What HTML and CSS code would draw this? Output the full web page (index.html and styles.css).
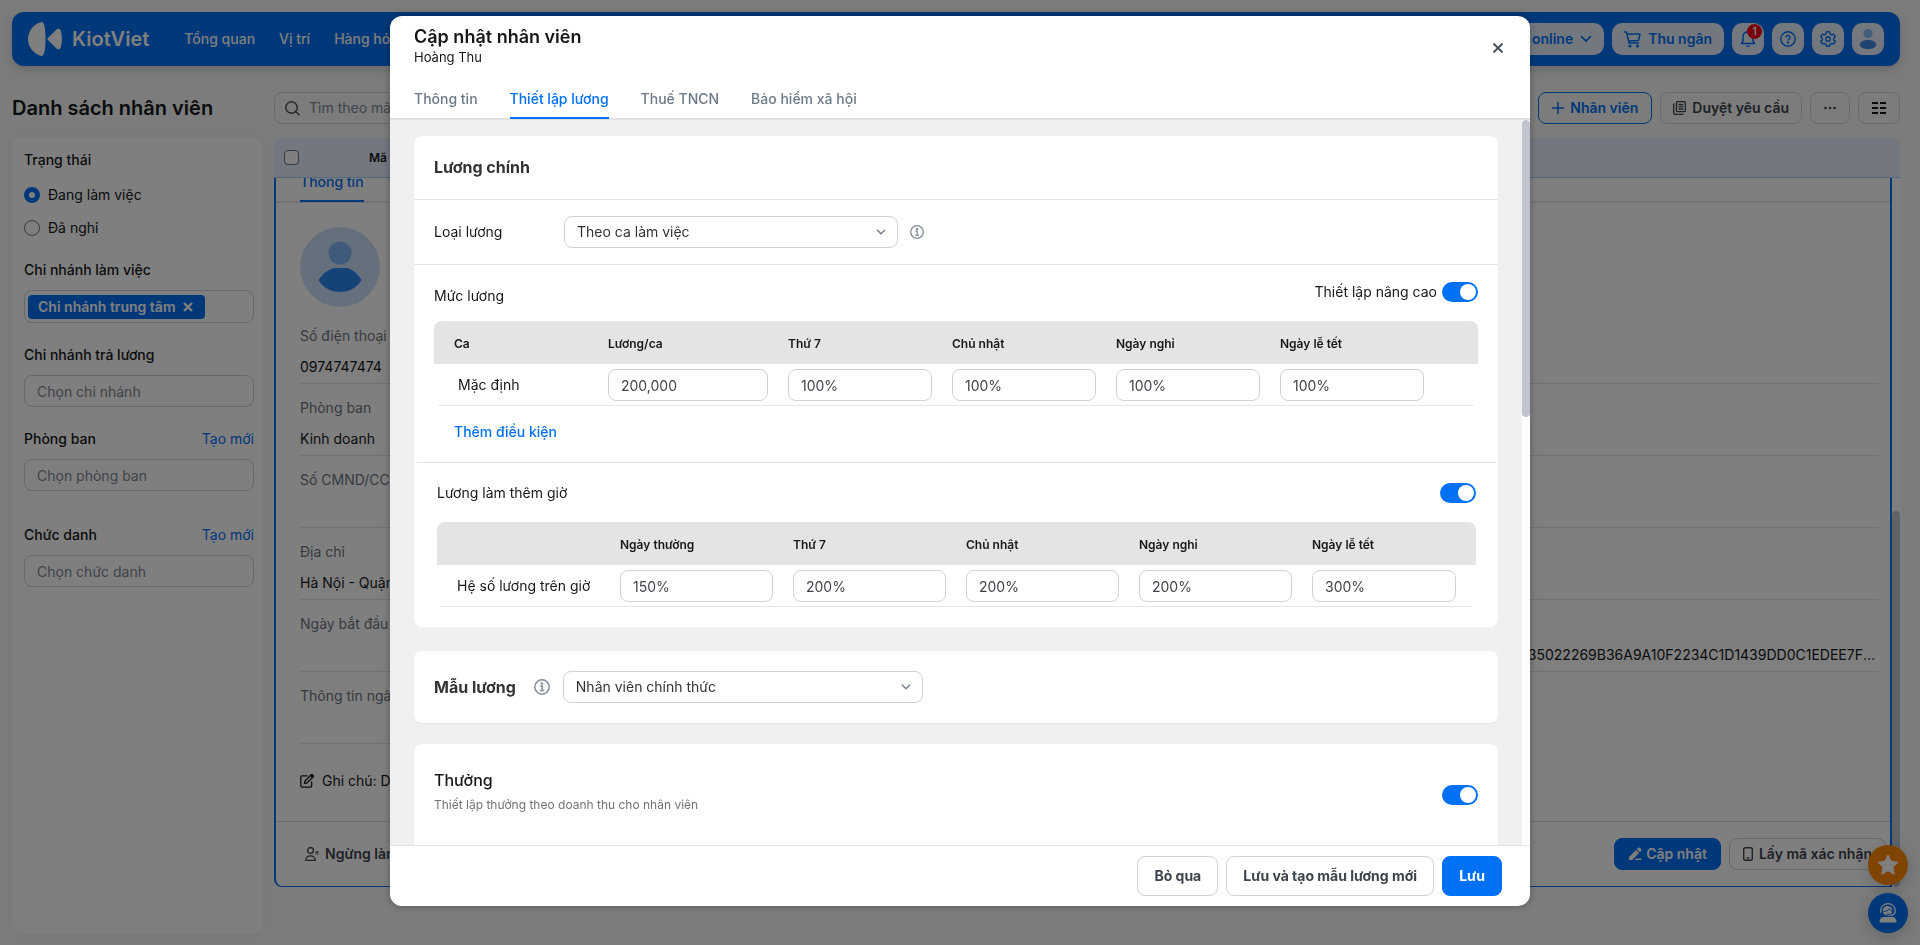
FILE: index.html
```html
<!DOCTYPE html>
<html lang="vi">
<head>
    <meta charset="UTF-8">
    <meta name="viewport" content="width=device-width, initial-scale=1.0">
    <title>Danh sách nhân viên</title>
    <link rel="stylesheet" href="styles.css">
</head>
<body>

    <div class="page">
        <header class="topbar">
            <a href="#" class="logo">
                <svg width="34" height="34" viewBox="0 0 34 34" fill="currentColor">
                    <path d="M14 0C16 0 17.500 6 17.500 17S16 34 13.500 34C7 32.500 0 26 0 17S7 1 14 0Z"/>
                    <path d="M19.500 16.500L28.500 7.500C30 6 32 6.500 32.700 8.500C34.300 14 34.300 20 32.700 25.500C32 27.500 30 28 28.500 26.500L19.500 17.500Q19 17 19.500 16.500Z"/>
                </svg>
                <span>KiotViet</span>
            </a>
            <nav class="topnav">
                <a href="#">Tổng quan</a>
                <a href="#">Vị trí</a>
                <a href="#">Hàng hóa</a>
            </nav>
            <div class="top-actions">
                <button class="top-btn">Bán online
                    <svg width="12" height="8" viewBox="0 0 12 8" fill="none" stroke="currentColor" stroke-width="1.700"><path d="M1 1l5 5 5-5"/></svg>
                </button>
                <button class="top-btn">
                    <svg width="17" height="17" viewBox="0 0 17 17" fill="none" stroke="currentColor" stroke-width="1.400"><path d="M0 1h2.500L5 12h10M3 3H16l-1.500 6.500L4.500 10"/><circle cx="6" cy="15" r="0.800" fill="currentColor"/><circle cx="13.500" cy="15" r="0.800" fill="currentColor"/></svg>
                    Thu ngân
                </button>
                <button class="top-icon" aria-label="Thông báo">
                    <svg width="16" height="18" viewBox="0 0 16 18" fill="none" stroke="currentColor" stroke-width="1.500"><path d="M1.500 13.500H14.500L13 11V7C13 4 11 2 8 2S3 4 3 7v4z" stroke-linejoin="round"/><path d="M6 15.500a2 1.500 0 0 0 4 0z" fill="currentColor" stroke="none"/></svg>
                    <span class="badge">1</span>
                </button>
                <button class="top-icon" aria-label="Trợ giúp">
                    <svg width="16" height="16" viewBox="0 0 16 16" fill="none" stroke="currentColor" stroke-width="1.400"><circle cx="8" cy="8" r="7.200"/><path d="M6 6.500a2 2 0 1 1 3 1.700q-1 .5-1 1.500"/><circle cx="8" cy="11.600" r="0.500" fill="currentColor"/></svg>
                </button>
                <button class="top-icon" aria-label="Thiết lập">
                    <svg width="16" height="16" viewBox="0 0 16 16" fill="none" stroke="currentColor" stroke-width="1.400" stroke-linejoin="round"><path d="M6.500 .8h3l.5 2 1.700 1 2-.6 1.500 2.600-1.500 1.500v1.500l1.500 1.500-1.500 2.600-2-.6-1.700 1-.5 2h-3l-.5-2-1.700-1-2 .6L.8 10.300l1.500-1.500V7.300L.8 5.800l1.500-2.600 2 .6 1.700-1z"/><circle cx="8" cy="8" r="2.200"/></svg>
                </button>
                <button class="top-icon" aria-label="Tài khoản">
                    <svg width="18" height="20" viewBox="0 0 18 20"><circle cx="9" cy="4.500" r="4.500" fill="#82b6f5"/><path d="M1 14.500C4 9.500 14 9.500 17 14.500C19 22 -1 22 1 14.500Z" fill="#3f87dc"/></svg>
                </button>
            </div>
        </header>

        <div class="content">
            <aside class="side">
                <h1 class="page-title">Danh sách nhân viên</h1>
                <div class="filters">
                    <div class="filter filter-status">
                        <h2 class="filter-title">Trạng thái</h2>
                        <label class="radio"><input type="radio" name="status" checked> Đang làm việc</label>
                        <label class="radio"><input type="radio" name="status"> Đã nghỉ</label>
                    </div>
                    <div class="filter">
                        <h2 class="filter-title">Chi nhánh làm việc</h2>
                        <div class="tag-box">
                            <span class="tag">Chi nhánh trung tâm
                                <button class="tag-close" aria-label="Xóa"><svg width="10" height="10" viewBox="0 0 10 10" stroke="currentColor" stroke-width="2.400"><path d="M1 1l8 8M9 1l-8 8"/></svg></button>
                            </span>
                        </div>
                    </div>
                    <div class="filter">
                        <label class="filter-title" for="payBranch">Chi nhánh trả lương</label>
                        <input class="field-input" id="payBranch" type="text" placeholder="Chọn chi nhánh">
                    </div>
                    <div class="filter filter-wide">
                        <div class="filter-row"><label class="filter-title" for="dept">Phòng ban</label><a href="#">Tạo mới</a></div>
                        <input class="field-input" id="dept" type="text" placeholder="Chọn phòng ban">
                    </div>
                    <div class="filter">
                        <div class="filter-row"><label class="filter-title" for="position">Chức danh</label><a href="#">Tạo mới</a></div>
                        <input class="field-input" id="position" type="text" placeholder="Chọn chức danh">
                    </div>
                </div>
            </aside>

            <main class="main">
                <div class="toolbar">
                    <div class="search">
                        <svg width="15" height="15" viewBox="0 0 15 15" fill="none" stroke="currentColor" stroke-width="1.500"><circle cx="6.500" cy="6.500" r="5.700"/><path d="M10.500 10.500l4 3.800"/></svg>
                        <input type="text" placeholder="Tìm theo mã, tên nhân viên" aria-label="Tìm kiếm">
                    </div>
                    <div class="toolbar-actions">
                        <button class="btn btn-outline">
                            <svg width="12" height="12" viewBox="0 0 12 12" stroke="currentColor" stroke-width="1.500"><path d="M6 0v12M0 6h12"/></svg>
                            Nhân viên
                        </button>
                        <button class="btn">
                            <svg width="13" height="14" viewBox="0 0 13 14" fill="none" stroke="currentColor" stroke-width="1.300"><rect x="3.500" y="0.700" width="8.800" height="10" rx="1"/><path d="M.7 2.500v9.500q0 1.300 1.300 1.300h8.500M5.700 3.500h4.500M5.700 5.700h4.500M5.700 8h4.500"/></svg>
                            Duyệt yêu cầu
                        </button>
                        <button class="btn btn-more" aria-label="Thêm">
                            <svg width="12" height="4" viewBox="0 0 12 4" fill="currentColor"><circle cx="1.500" cy="2" r="1.300"/><circle cx="6" cy="2" r="1.300"/><circle cx="10.500" cy="2" r="1.300"/></svg>
                        </button>
                        <button class="btn btn-cols" aria-label="Cột hiển thị">
                            <svg width="14" height="12" viewBox="0 0 14 12" stroke="#111" stroke-width="2"><path d="M0 1h6M8 1h6M0 6h6M8 6h6M0 11h6M8 11h6"/></svg>
                        </button>
                    </div>
                </div>

                <div class="list-head">
                    <input type="checkbox" aria-label="Chọn tất cả">
                    <span>Mã nhân viên</span>
                </div>
                <div class="list-scroll">
                    <section class="detail">
                        <div class="detail-tabs"><a href="#">Thông tin</a></div>
                        <div class="detail-grid">
                            <div class="detail-col">
                                <svg class="avatar" viewBox="0 0 80 80"><circle cx="40" cy="40" r="40" fill="#cce1fb"/><circle cx="40" cy="26" r="11.500" fill="#7eb5f6"/><path d="M18.500 53C24 44 32 41 36 41H46C50 41 57 45 61.500 53C53 69 27 69 18.500 53Z" fill="#2a87f0"/></svg>
                                <div class="info"><span>Số điện thoại</span><b>0974747474</b></div>
                                <div class="info"><span>Phòng ban</span><b>Kinh doanh</b></div>
                                <div class="info"><span>Số CMND/CCCD</span></div>
                                <div class="info"><span>Địa chỉ</span><b>Hà Nội - Quận Hoàn Kiếm</b></div>
                                <div class="info"><span>Ngày bắt đầu làm việc</span></div>
                                <div class="info"><span>Thông tin ngân hàng</span></div>
                            </div>
                            <div class="detail-col detail-last">
                                <div class="info"><a href="#">Chi tiết</a></div>
                                <div class="info"></div>
                                <div class="info"></div>
                                <div class="info"></div>
                                <div class="info"><b>9A4F835022269B36A9A10F2234C1D1439DD0C1EDEE7F6AB3C2</b></div>
                            </div>
                        </div>
                        <p class="note">
                            <svg width="14" height="14" viewBox="0 0 14 14" fill="none" stroke="currentColor" stroke-width="1.300"><path d="M7.500 1.800H2.200Q.8 1.800 .8 3.200V11.800Q.8 13.200 2.200 13.200H10.300Q11.700 13.200 11.700 11.800V7.500"/><path d="M4.500 9.500L5 7 11 1 13 3 7 9z"/><path d="M10.500 1.500L12 .5 13.500 2 12.500 3.500z" fill="currentColor"/></svg>
                            Ghi chú: Dài hạn
                        </p>
                        <div class="detail-foot">
                            <button class="btn btn-ghost">
                                <svg width="14" height="14" viewBox="0 0 14 14" fill="none" stroke="currentColor" stroke-width="1.300"><circle cx="5.500" cy="3.500" r="2.900"/><path d="M.7 13.300C.7 7.500 10.300 7.500 10.300 13.300zM10.500 4.500l3 3M13.500 4.500l-3 3"/></svg>
                                Ngừng làm việc
                            </button>
                            <div class="detail-btns">
                                <button class="btn btn-primary">
                                    <svg width="14" height="14" viewBox="0 0 14 14" fill="currentColor"><path d="M1 10L8 3l3 3-7 7H1zM8.800 2.200L10 1q1-1 2 0l1 1q1 1 0 2l-1.200 1.200zM6.500 13l1.500-1.500H13.500V13z"/></svg>
                                    Cập nhật
                                </button>
                                <button class="btn">
                                    <svg width="10" height="14" viewBox="0 0 10 14" fill="none" stroke="currentColor" stroke-width="1.400"><rect x="0.700" y="0.700" width="8.600" height="12.600" rx="1.500"/><path d="M3.500 11h3"/></svg>
                                    Lấy mã xác nhận
                                </button>
                            </div>
                        </div>
                    </section>
                    <div class="rail rail-list"><div class="thumb"></div></div>
                </div>
            </main>
        </div>

        <div class="floaters">
            <button class="float-btn float-star" aria-label="Đánh giá">
                <svg width="22" height="22" viewBox="0 0 22 22" fill="currentColor"><path d="M11 1l3.100 6.300 6.900 1-5 4.900 1.200 6.900L11 16.800l-6.200 3.300L6 13.200 1 8.300l6.900-1z" stroke="currentColor" stroke-linejoin="round"/></svg>
            </button>
            <button class="float-btn float-help" aria-label="Hỗ trợ">
                <svg width="18" height="20" viewBox="0 0 18 20" fill="none" stroke="currentColor" stroke-width="1.300"><path d="M1.800 10V7.500a7.200 6.900 0 0 1 14.400 0q0 4-3.500 4.700H9"/><path d="M9 2.700a5.200 5.200 0 0 0-5.200 5.200c0 3 3 4.600 5.200 4.600" fill="currentColor" stroke="none"/><circle cx="9" cy="7.500" r="4.300" fill="currentColor" stroke="none"/><path d="M4.500 8.500q4.500 .3 6-3 .8 2.500 3 2.800M7.500 11.200h3.500" stroke="#0070f4" stroke-width="1"/><path d="M.5 19.500q0-5.500 4.500-5.500h8q4.500 0 4.500 5.500z" fill="currentColor" stroke="none"/></svg>
            </button>
        </div>
    </div>

    <div class="overlay">
        <div class="modal" role="dialog" aria-labelledby="modalTitle">
            <div class="modal-head">
                <div>
                    <h2 id="modalTitle">Cập nhật nhân viên</h2>
                    <p>Hoàng Thu</p>
                </div>
                <button class="close" aria-label="Đóng">
                    <svg width="10" height="10" viewBox="0 0 10 10" stroke="currentColor" stroke-width="2"><path d="M.5 .5l9 9M9.500 .5l-9 9"/></svg>
                </button>
            </div>
            <nav class="tabs">
                <a href="#">Thông tin</a>
                <a href="#" class="active">Thiết lập lương</a>
                <a href="#">Thuế TNCN</a>
                <a href="#">Bảo hiểm xã hội</a>
            </nav>

            <div class="modal-body">
                <div class="cards">
                    <section class="card">
                        <h3 class="card-title">Lương chính</h3>
                        <div class="type-row">
                            <label for="salaryType">Loại lương</label>
                            <div class="select select-type">
                                <select id="salaryType"><option>Theo ca làm việc</option></select>
                                <svg width="10" height="6" viewBox="0 0 10 6" fill="none" stroke="currentColor" stroke-width="1.300"><path d="M1 .8l4 4 4-4"/></svg>
                            </div>
                            <svg class="info-icon" width="14" height="14" viewBox="0 0 16 16" fill="none" stroke="currentColor" stroke-width="1.500"><circle cx="8" cy="8" r="7.200"/><path d="M6.200 7H8.200V11.500M6 11.500h4.300"/><circle cx="8" cy="4.500" r="0.600" fill="currentColor"/></svg>
                        </div>
                        <div class="level">
                            <div class="level-head">
                                <h4>Mức lương</h4>
                                <label class="switch-label">Thiết lập nâng cao <input class="switch" type="checkbox" checked></label>
                            </div>
                            <table class="rates rates-shift">
                                <thead>
                                    <tr><th>Ca</th><th>Lương/ca</th><th>Thứ 7</th><th>Chủ nhật</th><th>Ngày nghỉ</th><th>Ngày lễ tết</th></tr>
                                </thead>
                                <tbody>
                                    <tr>
                                        <td class="shift-name">Mặc định</td>
                                        <td><input type="text" value="200,000" aria-label="Lương/ca"></td>
                                        <td><input type="text" value="100%" aria-label="Thứ 7"></td>
                                        <td><input type="text" value="100%" aria-label="Chủ nhật"></td>
                                        <td><input type="text" value="100%" aria-label="Ngày nghỉ"></td>
                                        <td><input type="text" value="100%" aria-label="Ngày lễ tết"></td>
                                    </tr>
                                </tbody>
                            </table>
                            <button class="link-btn">Thêm điều kiện</button>
                        </div>
                        <div class="overtime">
                            <div class="overtime-head">
                                <label for="overtime">Lương làm thêm giờ</label>
                                <input class="switch" id="overtime" type="checkbox" checked>
                            </div>
                            <table class="rates rates-overtime">
                                <thead>
                                    <tr><th></th><th>Ngày thường</th><th>Thứ 7</th><th>Chủ nhật</th><th>Ngày nghỉ</th><th>Ngày lễ tết</th></tr>
                                </thead>
                                <tbody>
                                    <tr>
                                        <td>Hệ số lương trên giờ</td>
                                        <td><input type="text" value="150%" aria-label="Ngày thường"></td>
                                        <td><input type="text" value="200%" aria-label="Thứ 7"></td>
                                        <td><input type="text" value="200%" aria-label="Chủ nhật"></td>
                                        <td><input type="text" value="200%" aria-label="Ngày nghỉ"></td>
                                        <td><input type="text" value="300%" aria-label="Ngày lễ tết"></td>
                                    </tr>
                                </tbody>
                            </table>
                        </div>
                    </section>

                    <section class="card template">
                        <label class="card-label" for="template">Mẫu lương</label>
                        <svg class="info-icon" width="16" height="16" viewBox="0 0 16 16" fill="none" stroke="currentColor" stroke-width="1.500"><circle cx="8" cy="8" r="7.200"/><path d="M6.200 7H8.200V11.500M6 11.500h4.300"/><circle cx="8" cy="4.500" r="0.600" fill="currentColor"/></svg>
                        <div class="select select-template">
                            <select id="template"><option>Nhân viên chính thức</option></select>
                            <svg width="10" height="6" viewBox="0 0 10 6" fill="none" stroke="currentColor" stroke-width="1.300"><path d="M1 .8l4 4 4-4"/></svg>
                        </div>
                    </section>

                    <section class="card bonus">
                        <div>
                            <h3><label for="bonus">Thưởng</label></h3>
                            <p>Thiết lập thưởng theo doanh thu cho nhân viên</p>
                        </div>
                        <input class="switch" id="bonus" type="checkbox" checked>
                    </section>
                </div>
                <div class="rail"><div class="thumb"></div></div>
            </div>

            <div class="modal-foot">
                <button class="btn btn-lg">Bỏ qua</button>
                <button class="btn btn-lg">Lưu và tạo mẫu lương mới</button>
                <button class="btn btn-lg btn-primary">Lưu</button>
            </div>
        </div>
    </div>

</body>
</html>
```

FILE: styles.css
```css
* {
    box-sizing: border-box;
}

body {
    margin: 0;
    height: 100vh;
    overflow: hidden;
    font-family: Inter, "Noto Sans", sans-serif;
    font-size: 14px;
    line-height: 20px;
    color: #15171a;
    background-color: #f6f9f7;
}

h1, h2, h3, h4, p {
    margin: 0;
}

a {
    color: #0070f4;
    text-decoration: none;
}

button, input, select {
    font: inherit;
    color: inherit;
}

button {
    cursor: pointer;
}

/* Page behind the dialog */
.page {
    display: flex;
    flex-direction: column;
    height: 100vh;
    padding: 12px 20px 12px 12px;
}

.topbar {
    display: flex;
    align-items: center;
    height: 54px;
    padding: 0 16px;
    border-radius: 12px;
    background-color: #0070f4;
    box-shadow: 0 4px 12px rgba(0, 0, 0, 0.15);
}

.logo {
    display: flex;
    align-items: center;
    gap: 10px;
    color: #fff;
    font-size: 20px;
    font-weight: 600;
}

.topnav {
    display: flex;
    gap: 24px;
    margin-left: 35px;
}

.topnav a {
    color: #fff;
    font-weight: 500;
}

.top-actions {
    display: flex;
    gap: 8px;
    margin-left: auto;
}

.top-btn,
.top-icon {
    position: relative;
    display: flex;
    align-items: center;
    justify-content: center;
    gap: 7px;
    height: 32px;
    padding: 0 12px;
    border: 0;
    border-radius: 10px;
    background-color: #e6f0ff;
    color: #0070f4;
    font-weight: 600;
}

.top-icon {
    width: 32px;
    padding: 0;
}

.badge {
    position: absolute;
    top: 1px;
    right: 2px;
    width: 15px;
    height: 15px;
    border-radius: 8px;
    background-color: #f00018;
    color: #fff;
    font-size: 10px;
    line-height: 15px;
}

.content {
    display: flex;
    flex: 1;
    gap: 12px;
    min-height: 0;
    padding-top: 26px;
}

.side {
    display: flex;
    flex-direction: column;
    width: 250px;
}

.page-title {
    margin-bottom: 14px;
    font-size: 20px;
    font-weight: 600;
    line-height: 32px;
}

.filters {
    flex: 1;
    padding: 12px 8px 12px 12px;
    border-radius: 8px;
    background-color: #fff;
    box-shadow: 0 0 16px rgba(0, 0, 0, 0.04);
}

.filter {
    margin-bottom: 22px;
}

.filter-status {
    margin-bottom: 16px;
}

.filter-status .filter-title {
    margin-bottom: 8px;
}

.filter-wide {
    margin-bottom: 34px;
}

.filter-title {
    display: block;
    margin-bottom: 10px;
    font-size: 14px;
    font-weight: 500;
    line-height: 20px;
}

.filter-row {
    display: flex;
    justify-content: space-between;
}

.radio {
    display: flex;
    align-items: center;
    gap: 8px;
    height: 33px;
}

.radio input {
    width: 16px;
    height: 16px;
    margin: 0;
    border: 1px solid #6c7580;
    border-radius: 50%;
    appearance: none;
}

.radio input:checked {
    border: 5px solid #0070f4;
}

.tag-box,
.field-input,
.rates input,
.select select {
    width: 100%;
    height: 32px;
    padding: 0 12px;
    border: 1px solid #cfd2d9;
    border-radius: 8px;
    background-color: #fff;
}

.tag-box {
    display: flex;
    align-items: center;
    height: 33px;
    padding: 0 3px;
}

.tag {
    display: flex;
    align-items: center;
    gap: 7px;
    height: 24px;
    padding: 0 12px 0 10px;
    border-radius: 4px;
    background-color: #0070f4;
    color: #fff;
    font-weight: 600;
}

.tag-close {
    display: flex;
    padding: 0;
    border: 0;
    background: none;
}

.field-input::placeholder,
.search input::placeholder {
    color: #7f8894;
    opacity: 1;
}

.main {
    display: flex;
    flex: 1;
    flex-direction: column;
    min-width: 0;
    padding-bottom: 46px;
}

.toolbar {
    display: flex;
    justify-content: space-between;
    margin-bottom: 14px;
}

.search {
    display: flex;
    align-items: center;
    gap: 9px;
    width: 400px;
    height: 32px;
    padding: 0 10px;
    border: 1px solid #cfd2d9;
    border-radius: 8px;
    color: #4a525c;
}

.search input {
    flex: 1;
    padding: 0;
    border: 0;
    background: none;
}

.toolbar-actions,
.detail-btns {
    display: flex;
    gap: 8px;
}

.btn {
    display: flex;
    align-items: center;
    justify-content: center;
    gap: 6px;
    height: 32px;
    padding: 0 12px;
    border: 1px solid #cfd2d9;
    border-radius: 8px;
    background-color: transparent;
    color: #3d444d;
    font-weight: 600;
}

.btn-outline {
    padding: 0 13px;
    border-color: #0070f4;
    color: #0070f4;
}

.btn-primary {
    border-color: #0070f4;
    background-color: #0070f4;
    color: #fff;
}

.btn-ghost {
    border-color: transparent;
}

.detail-btns .btn {
    padding: 0 13px;
}

.detail-btns .btn-primary {
    gap: 4px;
}

.btn-more {
    width: 40px;
}

.btn-cols {
    width: 42px;
}

.btn-lg {
    height: 40px;
    padding: 0 16px;
    background-color: #fff;
    font-weight: 700;
}

.btn-lg.btn-primary {
    background-color: #0070f4;
}

.list-head {
    display: flex;
    align-items: center;
    gap: 70px;
    height: 40px;
    padding: 0 10px;
    border-bottom: 1px solid #a9c8f2;
    border-radius: 8px 8px 0 0;
    background-color: #e6f0ff;
    font-size: 12px;
    font-weight: 600;
}

.list-head input {
    width: 15px;
    height: 15px;
    margin: 0;
    border: 1px solid #6c7580;
    border-radius: 4px;
    background-color: #fff;
    appearance: none;
}

/* The list is scrolled down to its last row */
.list-scroll {
    display: flex;
    flex: 1;
    align-items: flex-end;
    min-height: 0;
    overflow: hidden;
}

.detail {
    flex: 1;
    min-width: 0;
    border: 2px solid #0070f4;
    border-top: 0;
    border-bottom-width: 1px;
    border-radius: 0 0 0 8px;
    background-color: #fff;
}

.detail-tabs {
    display: flex;
    padding: 0 24px;
    border-bottom: 2px solid #e3e5e8;
}

.detail-tabs a {
    margin-bottom: -1px;
    padding: 8px 0;
    border-bottom: 2px solid #0070f4;
    font-weight: 500;
}

.detail-grid {
    display: grid;
    grid-template-columns: repeat(4, 1fr);
    padding: 24px 12px 0 24px;
}

.detail-last {
    grid-column: 4;
    padding-top: 85px;
    min-width: 0;
}

.avatar {
    display: block;
    width: 80px;
    height: 80px;
    margin-bottom: 5px;
}

.info {
    display: flex;
    flex-direction: column;
    gap: 11px;
    height: 72px;
    padding: 14px 0 6px;
    border-bottom: 1px solid #e3e5e8;
}

.info span {
    color: #6c7580;
}

.info b {
    overflow: hidden;
    font-weight: 400;
    text-overflow: ellipsis;
    white-space: nowrap;
}

.detail-last .info {
    padding-top: 45px;
}

.note {
    display: flex;
    align-items: center;
    gap: 8px;
    padding: 27px 24px 30px;
}

.detail-foot {
    display: flex;
    justify-content: space-between;
    padding: 16px 4px 16px 16px;
    border-top: 1px solid #cfd2d9;
}

/* Scrollbars */
.rail {
    flex: none;
    align-self: stretch;
    width: 8px;
    background-color: #fff;
}

.rail .thumb {
    height: 41%;
    border-radius: 4px;
    background-color: #c1c6cd;
}

.rail-list {
    display: flex;
    align-items: flex-end;
}

.rail-list .thumb {
    width: 8px;
    height: 53%;
}

.floaters {
    position: fixed;
    right: 12px;
    bottom: 12px;
    display: flex;
    flex-direction: column;
    gap: 8px;
}

.float-btn {
    display: flex;
    align-items: center;
    justify-content: center;
    width: 40px;
    height: 40px;
    padding: 0;
    border: 0;
    border-radius: 50%;
    color: #fff;
    box-shadow: 0 4px 16px rgba(0, 0, 0, 0.2);
}

.float-star {
    background-color: #ff8800;
}

.float-help {
    background-color: #0070f4;
}

/* Dialog */
.overlay {
    position: fixed;
    inset: 0;
    padding: 16px;
    background-color: rgba(0, 0, 0, 0.5);
}

.modal {
    display: flex;
    flex-direction: column;
    max-width: 1140px;
    height: calc(100vh - 55px);
    margin: 0 auto;
    border-radius: 12px;
    background-color: #fff;
    box-shadow: 0 0 8px rgba(0, 0, 0, 0.3);
    overflow: hidden;
}

.modal-head {
    display: flex;
    align-items: flex-end;
    justify-content: space-between;
    padding: 9px 24px 0;
}

.modal-head h2 {
    font-size: 18px;
    font-weight: 600;
    line-height: 24px;
}

.modal-head p {
    font-size: 13px;
    line-height: 16px;
}

.close {
    display: flex;
    padding: 3px 3px 12px;
    border: 0;
    background: none;
    color: #4a525c;
}

.tabs {
    display: flex;
    gap: 32px;
    margin-top: 16px;
    padding: 0 24px;
    border-bottom: 2px solid #dfe1e4;
}

.tabs a {
    margin-bottom: -1px;
    padding: 8px 0;
    border-bottom: 2px solid transparent;
    color: #6c7a89;
    font-weight: 500;
}

.tabs .active {
    border-bottom-color: #0070f4;
    color: #0070f4;
}

.modal-body {
    display: flex;
    flex: 1;
    min-height: 0;
    overflow: hidden;
}

.cards {
    flex: 1;
    padding: 16px 24px 0;
    background-color: #eff0f2;
}

.card {
    margin-bottom: 20px;
    border-radius: 8px;
    background-color: #fff;
}

.card:first-child {
    margin-bottom: 24px;
}

.card-title,
.card-label {
    color: #333;
    font-size: 16px;
    font-weight: 700;
    line-height: 24px;
}

.card-title {
    padding: 19px 20px 20px;
}

.type-row {
    display: flex;
    align-items: center;
    padding: 16px 20px;
    border-top: 1px solid #e2e3e5;
    border-bottom: 1px solid #e2e3e5;
}

.type-row label {
    width: 130px;
}

.select {
    position: relative;
}

.select select {
    color: #333;
    appearance: none;
}

.select svg {
    position: absolute;
    top: 13px;
    right: 12px;
    color: #6c7a89;
    pointer-events: none;
}

.select-type {
    width: 334px;
}

.select-template {
    width: 360px;
}

.info-icon {
    margin-left: 12px;
    color: #7f8c9b;
}

.level {
    padding: 16px 20px 20px;
}

.level-head {
    display: flex;
    justify-content: space-between;
    margin-bottom: 15px;
}

.level-head h4 {
    padding-top: 5px;
    font-size: 14px;
    font-weight: 400;
}

.switch-label {
    display: flex;
    align-items: center;
    gap: 5px;
    height: 22px;
}

.switch {
    flex: none;
    display: flex;
    align-items: center;
    justify-content: flex-end;
    width: 36px;
    height: 20px;
    margin: 0;
    padding: 2px;
    border-radius: 10px;
    background-color: #0070f4;
    appearance: none;
}

.switch::before {
    content: "";
    width: 16px;
    height: 16px;
    border-radius: 50%;
    background-color: #fff;
}

.rates {
    width: 100%;
    border-collapse: separate;
    border-spacing: 0;
    table-layout: fixed;
}

.rates th {
    height: 43px;
    padding: 2px 0 0 20px;
    background-color: #e4e4e4;
    font-size: 12px;
    font-weight: 600;
    text-align: left;
}

.rates th:first-child {
    border-top-left-radius: 8px;
}

.rates th:last-child {
    border-top-right-radius: 8px;
}

.rates tbody tr {
    background: linear-gradient(#e5e6e8, #e5e6e8) center bottom / calc(100% - 8px) 1px no-repeat;
}

.rates td {
    height: 42px;
    padding: 0 0 0 20px;
}

.rates input {
    display: block;
    color: #40444a;
}

.rates .shift-name {
    padding-left: 24px;
}

.rates-shift th:nth-child(1) {
    width: 154px;
}

.rates-shift th:nth-child(2) {
    width: 180px;
}

.rates-shift th:nth-child(3),
.rates-shift th:nth-child(4),
.rates-shift th:nth-child(5) {
    width: 164px;
}

.rates-shift td:last-child input {
    width: 144px;
}

.rates-overtime th:nth-child(1) {
    width: 163px;
}

.rates-overtime th:nth-child(n+2) {
    width: 173px;
}

.rates-overtime th:last-child {
    width: auto;
}

.rates-overtime td:last-child {
    padding-right: 20px;
}

.link-btn {
    display: block;
    margin: 16px 0 0 20px;
    padding: 0;
    border: 0;
    background: none;
    color: #0070f4;
    font-weight: 500;
}

.overtime {
    margin: 0 2px 0 3px;
    padding: 20px 20px;
    border-top: 1px solid #e2e3e5;
}

.overtime-head {
    display: flex;
    justify-content: space-between;
    margin-bottom: 19px;
}

.template {
    display: flex;
    align-items: center;
    height: 73px;
    padding: 0 20px;
    border-bottom: 1px solid #e2e3e5;
}

.template .info-icon {
    margin: 0 13px 0 18px;
}

.bonus {
    display: flex;
    align-items: flex-start;
    justify-content: space-between;
    padding: 24px 20px 60px;
}

.bonus h3 {
    font-size: 16px;
    font-weight: 500;
    line-height: 24px;
}

.bonus p {
    margin-top: 3px;
    color: #6f7378;
    font-size: 12px;
}

.bonus .switch {
    margin-top: 17px;
}

.modal-foot {
    display: flex;
    justify-content: flex-end;
    gap: 8px;
    padding: 10px 28px;
    border-top: 1px solid #e2e3e5;
}
```
